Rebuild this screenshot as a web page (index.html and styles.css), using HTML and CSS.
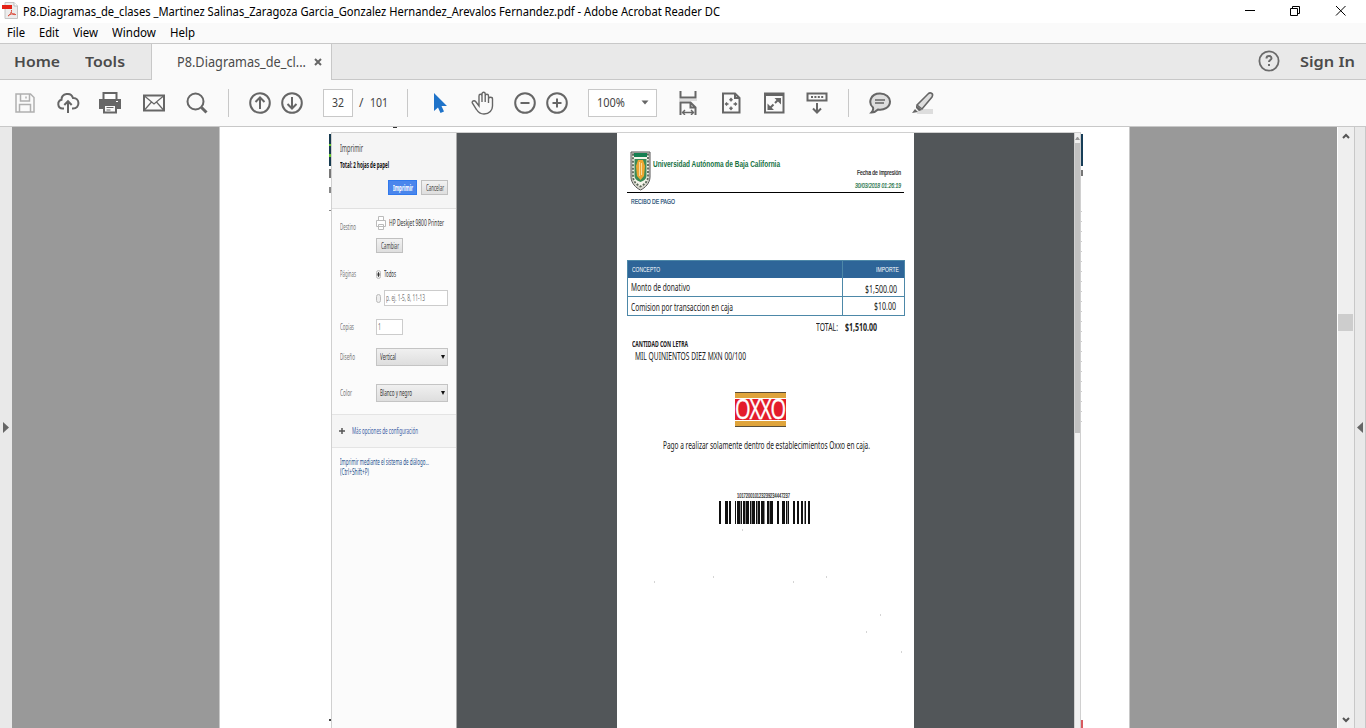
FILE: index.html
```html
<!DOCTYPE html>
<html lang="es">
<head>
<meta charset="utf-8">
<title>P8.Diagramas_de_clases - Adobe Acrobat Reader DC</title>
<link rel="stylesheet" href="styles.css">
</head>
<body>
<header class="titlebar">
  <svg class="app-icon" width="17" height="18" viewBox="0 0 17 18"><path d="M3 .5h9l3.500 3.500v12.500H3z" fill="#ececec" stroke="#c4c4c4"/><path d="M12 .5V4h3.500" fill="#fff" stroke="#bbb"/><path d="M0 3h10v4H0z" fill="#e32216"/><path d="M6 14c2-1 4-4 3.500-6M9 10c1 2 2 3 5 2.500M6 14c2-2 4-2.500 7-2" fill="none" stroke="#dc5040"/></svg>
  <span class="fit title" data-width="697">P8.Diagramas_de_clases _Martinez Salinas_Zaragoza Garcia_Gonzalez Hernandez_Arevalos Fernandez.pdf - Adobe Acrobat Reader DC</span>
  <svg class="win-buttons" width="106" height="12" viewBox="0 0 106 12" fill="none" stroke="#000"><path d="M1 5.500h10M46.500 3.500h7v7h-7zM48.500 3.500v-2h7v7h-2"/><path d="m92 1 9.500 9.500m0-9.500L92 10.500"/></svg>
</header>
<nav class="menubar">
  <span class="fit" data-width="18">File</span>
  <span class="fit" data-width="20">Edit</span>
  <span class="fit" data-width="25">View</span>
  <span class="fit" data-width="44">Window</span>
  <span class="fit" data-width="25">Help</span>
</nav>
<div class="tabbar">
  <div class="main-tabs"><b class="fit" data-width="46">Home</b><b class="fit" data-width="40">Tools</b></div>
  <div class="doc-tab"><span class="fit" data-width="129">P8.Diagramas_de_cl...</span><svg width="8" height="8" viewBox="0 0 8 8"><path d="m1 1 6 6m0-6L1 7" stroke="#666" stroke-width="2"/></svg></div>
  <div class="account">
    <svg width="22" height="22" viewBox="0 0 22 22" fill="none" stroke="#6b6b6b" stroke-width="1.800"><circle cx="11" cy="11" r="9.600"/><path d="M8.500 8.500c0-3.300 5-3 5-.3 0 1.800-2.500 1.800-2.500 3.800M11 14v2" stroke-width="2"/></svg>
    <b class="fit" data-width="55">Sign In</b>
  </div>
</div>
<div class="toolbar">
  <div class="tools file-tools">
    <svg class="muted" viewBox="0 0 24 24"><path d="M3 3h14.500L21 6.500V21H3zM7.500 3v7h9V3M6.500 21v-7.500h11V21"/><path d="M13 5.500v2"/></svg>
    <svg viewBox="0 0 24 24"><path d="M8 17.500H6.500a4.500 4.500 0 0 1-1-8.800C5.500 2.500 15 .5 17 7c7-.5 7.500 10.500 0 10.500h-1M12 22V10.500M8.300 14l3.700-3.800 3.700 3.800"/></svg>
    <svg viewBox="1 0 24 24"><path d="M5.500 8V2h13v6" fill="#fff"/><path d="M1 8h22v10h-4v-4H5v4H1z" fill="#666" stroke="none"/><path d="M6 14h12v7.500H6z" fill="#fafafa"/><path d="M8.500 16.500h7M8.500 19h4" stroke-width="1.200"/><path d="M18 10.500h2" stroke="#fff" stroke-width="1"/></svg>
    <svg viewBox="0 0 24 24"><path d="M2 4.500h20v15H2z"/><path d="m2.500 5 9.500 8 9.500-8M2.500 19l7-8M21.500 19l-7-8" stroke-width="1.200"/></svg>
    <svg viewBox="0 0 24 24"><circle cx="10.500" cy="10.500" r="8"/><path d="m16.500 16.500 5 5" stroke-width="3"/></svg>
  </div>
  <i class="rule"></i>
  <div class="tools page-tools">
    <svg viewBox="0 0 24 24"><circle cx="12" cy="12" r="9.800"/><path d="M12 18V6.500M7.500 11 12 6.500l4.500 4.500"/></svg>
    <svg viewBox="0 0 24 24"><circle cx="12" cy="12" r="9.800"/><path d="M12 6v11.500M7.500 13l4.500 4.500 4.500-4.500"/></svg>
  </div>
  <div class="page-field"><span class="fit" data-width="12">32</span></div>
  <div class="page-total"><span>/</span><span class="fit" data-width="18">101</span></div>
  <i class="rule"></i>
  <div class="tools pointer-tools">
    <svg viewBox="0 0 24 24"><path d="M6 2v18l4-3.500 2.500 5.500 3.500-1.500-2.500-5.500H19z" fill="#1f73c9" stroke="none"/></svg>
    <svg viewBox="0 0 24 24" class="thin"><path d="M8 13V5c0-2.300 3-2.300 3 0V3c0-2.300 3.200-2.300 3.200 0v2c0-2.300 3.300-2.300 3.300 0v3c0-2.300 4-2.300 4 0v7c0 4-3 8-8.500 8-4 0-6-2-7.500-4.500L1.300 12c-.8-2 2-3 3.500-1.200L8 15zM11 5v6M14.200 4v7M17.500 7v5"/></svg>
  </div>
  <div class="tools zoom-tools">
    <svg viewBox="0 0 24 24"><circle cx="12" cy="12" r="9.800"/><path d="M7.500 12h9"/></svg>
    <svg viewBox="0 0 24 24"><circle cx="12" cy="12" r="9.800"/><path d="M7.500 12h9M12 7.500v9"/></svg>
  </div>
  <div class="zoom-field"><span class="fit" data-width="28">100%</span><svg width="8" height="5" viewBox="0 0 8 5"><path d="M.5.5h7L4 4.500z" fill="#666"/></svg></div>
  <div class="tools view-tools">
    <svg viewBox="0 0 24 24"><path d="M4.500 0v6.500h15V0"/><path d="M3 8h18v2H3z" fill="#ddd" stroke="none"/><path d="M4.500 24V11.500h10l5 5V24M14.500 11.500v5h5"/><path d="M6.500 21.500h11M9 19l-2.500 2.500L9 24M15 19l2.500 2.500L15 24" stroke-width="1.400"/></svg>
    <svg viewBox="0 0 24 24"><path d="M4 2.500h12l4.500 4.500v14.500H4zM16 2.500V7h4.500"/><path d="M12 7.500v3M12 15.500v3M6.500 13h3M14.500 13h3M10.500 9.200 12 7.500l1.500 1.700M10.500 16.800l1.500 1.700 1.500-1.700M8 11.500 6.500 13 8 14.500M16 11.500l1.500 1.500-1.500 1.500" stroke-width="1.300"/></svg>
    <svg viewBox="0 0 24 24"><path d="M3 2.500h18.500v19H3z"/><path d="M3 4h18" stroke-width="2"/><path d="M12.500 7H19v6.500zM5.500 12.500V19H12z" fill="#666" stroke="none"/><path d="m13 12 4-4M7.500 17.500l4-4"/></svg>
    <svg viewBox="0 0 24 24"><path d="M2.500 2.500h19v7h-19zM12 12v9.500M8 17.500l4 4 4-4"/><path d="M6 6h12.500" stroke-dasharray="2 1.400"/></svg>
  </div>
  <i class="rule"></i>
  <div class="tools note-tools">
    <svg viewBox="0 0 24 24"><path d="M5 16.500C0 12 2 2.500 12 2.500c6 0 10 4 10 8 0 6-6.500 9-12 8-2 2-4.500 3-6.500 3 1.500-1.500 2-3 1.500-5z" fill="#dedede"/><path d="M7 9h10M7 12h9" stroke-width="1.300"/></svg>
    <svg viewBox="0 0 24 24"><path d="M7 18h15v5H6z" fill="#ddd" stroke="none"/><path d="m6 14 11-11c2-2 6-1 4 3L11 18z" fill="#dedede" stroke-width="1.600"/><path d="m5 14 6 5-3 1-3-3zM4 18l3 3-6 1z" fill="#666" stroke="none"/></svg>
  </div>
</div>

<main class="viewer">
  <aside class="side-left"><svg width="6" height="11" viewBox="0 0 6 11"><path d="M0 0v11l6-5.500z" fill="#666"/></svg></aside>
  <section class="canvas">
    <div class="page">
      <i class="descender"></i>
      <div class="sliver left"><i class="navy"></i><i class="mark m1"></i><i class="mark m2"></i><i class="mark m3"></i><i class="mark m4"></i></div>
      <div class="shot">
        <form class="print-panel">
          <div class="panel-head">
            <span class="fit heading" data-width="23">Imprimir</span>
            <b class="fit total-pages" data-width="49">Total: 2 hojas de papel</b>
            <div class="actions"><div class="btn primary"><b class="fit" data-width="20">Imprimir</b></div><div class="btn"><span class="fit" data-width="18">Cancelar</span></div></div>
          </div>
          <div class="row destination"><label><span class="fit" data-width="16">Destino</span></label><svg width="10" height="14" viewBox="0 0 10 14" fill="#fff" stroke="#bbb"><path d="M2.500 4V.5h5V4M.5 4.500h9v6h-9zM2.500 8.500h5v5h-5z"/></svg><span class="fit dark" data-width="55">HP Deskjet 9800 Printer</span></div>
          <div class="row change"><label></label><div class="btn"><span class="fit" data-width="18">Cambiar</span></div></div>
          <div class="row all"><label><span class="fit" data-width="16">Páginas</span></label><i class="radio on"></i><span class="fit dark" data-width="12">Todos</span></div>
          <div class="row range"><label></label><i class="radio"></i><div class="field wide"><span class="fit" data-width="39">p. ej. 1-5, 8, 11-13</span></div></div>
          <div class="row copies"><label><span class="fit" data-width="14">Copias</span></label><div class="field"><span class="fit" data-width="3">1</span></div></div>
          <div class="row layout"><label><span class="fit" data-width="15">Diseño</span></label><div class="select"><span class="fit" data-width="16">Vertical</span><i class="caret"></i></div></div>
          <div class="row color"><label><span class="fit" data-width="12">Color</span></label><div class="select"><span class="fit" data-width="32">Blanco y negro</span><i class="caret"></i></div></div>
          <div class="more"><svg width="6" height="6" viewBox="0 0 6 6"><path d="M0 3h6M3 0v6" stroke="#555" stroke-width="1.500"/></svg><span class="fit" data-width="66">Más opciones de configuración</span></div>
          <div class="system"><span class="fit" data-width="89">Imprimir mediante el sistema de diálogo...</span><span class="fit" data-width="29">(Ctrl+Shift+P)</span></div>
        </form>
        <div class="preview">
          <article class="receipt">
            <header class="receipt-head">
              <svg width="21" height="40" viewBox="0 0 21 40"><path d="M1 1h19v25c0 6-5 11-9.500 13C6 37 1 32 1 26z" fill="#d9d8cf" stroke="#555"/><path d="M3 3.500h15v22c0 4-3 8-7.500 10C6 33.500 3 29.500 3 25.500z" fill="#f5f5ea" stroke="#5b6758" stroke-width="1.800" stroke-dasharray="2 1.500"/><path d="M4 2h13v4H4z" fill="#168052"/><path d="M4.500 8h12v17c0 3-3 5-6 6-3-1-6-3-6-6z" fill="#3b8a56"/><path d="M8 9h5l2 6-1 10-3.500 4L7 25l-1-10z" fill="#eca632"/><path d="M9.500 11v14M11.500 12v12" stroke="#f7dd9d"/></svg>
              <b class="fit university" data-width="127">Universidad Autónoma de Baja California</b>
              <div class="date"><span class="fit" data-width="44">Fecha de impresión</span><em class="fit" data-width="46">30/03/2018 01:26:19</em></div>
            </header>
            <div class="kind"><span class="fit" data-width="44">RECIBO DE PAGO</span></div>
            <div class="table">
              <div class="tr th"><div><span class="fit" data-width="28">CONCEPTO</span></div><div><span class="fit" data-width="23">IMPORTE</span></div></div>
              <div class="tr first"><div><span class="fit" data-width="59">Monto de donativo</span></div><div><span class="fit" data-width="32">$1,500.00</span></div></div>
              <div class="tr second"><div><span class="fit" data-width="102">Comision por transaccion en caja</span></div><div><span class="fit" data-width="22">$10.00</span></div></div>
            </div>
            <div class="sum"><span class="fit" data-width="22">TOTAL:</span><b class="fit" data-width="32">$1,510.00</b></div>
            <div class="words"><b class="fit" data-width="56">CANTIDAD CON LETRA</b><span class="fit amount" data-width="111">MIL QUINIENTOS DIEZ MXN 00/100</span></div>
            <div class="oxxo"><div><b class="fit" data-width="50">OXXO</b></div></div>
            <div class="notice"><span class="fit" data-width="207">Pago a realizar solamente dentro de establecimientos Oxxo en caja.</span></div>
            <div class="barcode"><span class="fit" data-width="53">101720010123239234447237</span>
              <svg width="91" height="23" viewBox="0 0 91 23"><path d="M0 0h2v23H0zM6 0h3v23H6zM10 0h2v23h-2zM16 0h1v23h-1zM18 0h3v23h-3zM22 0h1v23h-1zM24 0h2v23h-2zM27 0h3v23h-3zM31 0h1v23h-1zM33 0h3v23h-3zM37 0h1v23h-1zM39 0h2v23h-2zM42 0h3v23h-3zM48 0h2v23h-2zM51 0h3v23h-3zM58 0h2v23h-2zM63 0h3v23h-3zM67 0h1v23h-1zM69 0h1v23h-1zM74 0h2v23h-2zM78 0h2v23h-2zM82 0h2v23h-2zM86 0h1v23h-1zM89 0h2v23h-2z" fill="#111"/><path d="M21 0h1v23h-1zM26 0h1v23h-1zM32 0h1v23h-1zM38 0h1v23h-1zM45 0h1v23h-1zM50 0h1v23h-1zM68 0h1v23h-1zM85 0h1v23h-1z" fill="#888"/></svg>
            </div>
            <svg class="specks" width="297" height="125" viewBox="0 0 297 125"><path d="M37 53h1M96 48h1M176 53h1M209 48h1M263 86h1M249 103h1M284 123h1M125 1h1" stroke="#aaa"/></svg>
          </article>
        </div>
        <div class="shot-scroll"><i class="up"></i><i class="thumb"></i></div>
      </div>
      <div class="sliver right"><i class="navy"></i><i class="mark r1"></i><i class="dots"></i><i class="red"></i></div>
    </div>
  </section>
  <div class="scrollbar"><svg width="8" height="6" viewBox="0 0 8 6"><path d="m1 5 3-3 3 3" fill="none" stroke="#555" stroke-width="2"/></svg><i class="thumb"></i><svg width="8" height="6" viewBox="0 0 8 6"><path d="m1 1 3 3 3-3" fill="none" stroke="#555" stroke-width="2"/></svg></div>
  <aside class="side-right"><svg width="6" height="11" viewBox="0 0 6 11"><path d="M6 0v11L0 5.500z" fill="#666"/></svg></aside>
</main>
<script src="fit.js"></script>
</body>
</html>
```

FILE: styles.css
```css
* { box-sizing: border-box; }
body { margin: 0; width: 1366px; height: 728px; overflow: hidden; display: flex; flex-direction: column; font: 12px "Noto Sans", sans-serif; color: #000; background: #fafafa; }
svg { display: block; flex: none; }
i { display: block; flex: none; }
.fit { display: block; flex: none; white-space: nowrap; transform-origin: 0 50%; }

.titlebar { height: 23px; flex: none; display: flex; align-items: center; background: #fff; padding-left: 2px; }
.app-icon { margin-bottom: 1px; }
.title { margin-left: 4px; }
.win-buttons { margin-left: 524px; margin-bottom: 2px; }
.menubar { height: 20px; flex: none; display: flex; align-items: center; gap: 14px; padding: 0 0 2px 7px; }

.tabbar { height: 37px; flex: none; display: flex; background: #e9e9e9; border-top: 1px solid #c8c8c8; font-size: 15px; color: #4b4b4b; }
.main-tabs { width: 151px; display: flex; align-items: center; gap: 25px; padding: 0 0 1px 14px; border-bottom: 1px solid #c8c8c8; }
.main-tabs .fit, .account .fit { font-weight: 600; }
.doc-tab { width: 181px; display: flex; align-items: center; gap: 8px; padding: 0 0 1px 25px; background: #fafafa; border: solid #c8c8c8; border-width: 0 1px; font-size: 13.500px; }
.account { flex: 1; display: flex; align-items: center; justify-content: flex-end; gap: 20px; padding: 0 11px 1px 0; border-bottom: 1px solid #c8c8c8; }

.toolbar { height: 47px; flex: none; display: flex; align-items: center; border-bottom: 1px solid #c8c8c8; color: #444; }
.tools { display: grid; grid-auto-flow: column; justify-items: center; }
.tools svg { width: 24px; height: 24px; fill: none; stroke: #666; stroke-width: 2; }
.tools svg.muted { stroke: #b0b0b0; stroke-width: 1.500; }
.tools svg.thin { stroke-width: 1.400; }
.rule { width: 1px; height: 28px; background: #c8c8c8; }
.file-tools { grid-auto-columns: 43px; margin: 0 10px 0 3px; }
.page-tools { grid-auto-columns: 32px; margin: 0 15px; }
.page-field { width: 30px; height: 28px; border: 1px solid #c8c8c8; background: #fff; display: flex; align-items: center; justify-content: center; padding-bottom: 1px; }
.page-total { display: flex; gap: 7px; width: 54px; padding: 0 0 1px 6px; }
.pointer-tools { grid-auto-columns: 43px; margin-left: 10px; }
.zoom-tools { grid-auto-columns: 32px; margin: 0 15px 0 5px; }
.zoom-field { width: 69px; height: 28px; border: 1px solid #c8c8c8; background: #fff; display: flex; align-items: center; justify-content: space-between; padding: 0 7px 1px 8px; }
.view-tools { grid-auto-columns: 43px; margin: 0 10px 0 9px; }
.note-tools { grid-auto-columns: 43px; margin-left: 9px; }

.viewer { height: 601px; flex: none; display: flex; background: #999; }
.side-left { width: 12px; background: #e9e9e9; display: flex; align-items: center; padding-left: 3px; }
.side-right { width: 12px; background: #e9e9e9; border: solid #c8c8c8; border-width: 0 1px; display: flex; align-items: center; padding-left: 2px; }
.canvas { width: 1325px; padding-left: 207px; }
.page { position: relative; width: 911px; height: 601px; display: flex; padding: 5px 0 0 109px; background: #fff; border: solid #c8c8c8; border-width: 0 1px; }
.descender { position: absolute; left: 173px; top: 0; width: 4px; height: 1px; background: #333; }
.scrollbar { width: 17px; background: #efefef; border-left: 1px solid #fff; display: flex; flex-direction: column; align-items: center; padding: 6px 1px 5px 0; }
.scrollbar .thumb { width: 15px; height: 17px; background: #cdcdcd; margin: 175px 0 auto; }

.sliver { width: 2px; display: flex; flex-direction: column; padding-top: 2px; flex: none; }
.sliver .navy { height: 32px; background: #173e58; }
.left .navy { background: linear-gradient(#173b50 0 10px, #62c626 10px 12px, #173b50 12px 20px, #62c626 20px 23px, #173b50 23px); }
.left .mark { height: 2px; background: #888; margin-top: 3px; }
.left .m1 { height: 9px; background: #777; }
.left .m2 { height: 6px; margin-top: 9px; }
.left .m3 { height: 1px; margin-top: 17px; }
.left .m4 { background: #444; margin-top: auto; margin-bottom: 7px; }
.right .r1 { height: 6px; margin-top: 4px; background: #777; }
.right .dots { width: 1px; height: 220px; margin-top: 26px; background: repeating-linear-gradient(#fff 0 9px, #ccc 9px 10px); }
.right .red { height: 8px; margin-top: auto; background: #d85b60; }
.shot { width: 750px; flex: none; display: flex; border: solid #d0d0d0; border-width: 1px 0 0 1px; }

.print-panel { width: 125px; flex: none; background: #fbfbfb; border-right: 1px solid #aaa; font-size: 8.200px; line-height: 10px; color: #777; }
.panel-head { height: 76px; padding: 9px 8px 0; background: #f5f5f5; border-bottom: 1px solid #e0e0e0; display: flex; flex-direction: column; color: #333; }
.heading { font-size: 10px; line-height: 12px; color: #444; }
.total-pages { margin-top: 6px; color: #111; }
.actions { display: flex; gap: 4px; justify-content: flex-end; margin-top: 10px; }
.btn { height: 15px; width: 27px; display: flex; align-items: center; justify-content: center; background: linear-gradient(#f2f2f2, #dedede); border: 1px solid #c0c0c0; color: #444; }
.btn.primary { width: 29px; background: #4a86ec; border-color: #3079ed; color: #fff; }
.row { display: flex; align-items: center; padding-left: 8px; }
.row label { width: 36px; flex: none; }
.dark { color: #333; }
.destination { height: 14px; margin-top: 7px; }
.destination label { padding-top: 8px; }
.destination .dark { margin-left: 3px; }
.change { margin-top: 8px; }
.all { height: 12px; margin-top: 15px; }
.radio { width: 5px; height: 9px; border: 1px solid #bbb; border-radius: 3px; background: #eee; margin-right: 3px; }
.radio.on { background: radial-gradient(ellipse, #333 0 35%, #eee 60%); }
.range { height: 16px; margin-top: 10px; }
.field { width: 27px; height: 16px; display: flex; align-items: center; padding-left: 1px; border: 1px solid #ccc; background: #fff; }
.field.wide { width: 64px; }
.copies { margin-top: 13px; }
.layout { margin-top: 13px; }
.color { margin-top: 18px; }
.select { width: 72px; height: 18px; display: flex; align-items: center; justify-content: space-between; padding: 0 2px 0 3px; border: 1px solid #c4c4c4; background: linear-gradient(#f0f0f0, #dedede); color: #333; }
.caret { border: 2px solid transparent; border-top: 4px solid #111; border-bottom: 0; }
.more { height: 34px; margin-top: 12px; display: flex; align-items: center; gap: 7px; padding: 0 0 1px 7px; background: #f5f5f5; border: solid #e4e4e4; border-width: 1px 0; color: #3d62a5; }
.system { display: flex; flex-direction: column; padding: 9px 8px 0; color: #24508c; }

.preview { width: 617px; flex: none; padding-left: 160px; background: #525659; }
.receipt { width: 297px; height: 595px; background: #fff; padding-left: 10px; font-size: 10px; line-height: 12px; color: #222; }
.receipt-head { width: 277px; height: 60px; padding: 18px 3px 0; display: flex; border-bottom: 1px solid #000; }
.university { margin: 7px 0 0 2px; font: bold 9px/12px "Liberation Sans", sans-serif; color: #167142; }
.date { flex: 1; display: flex; flex-direction: column; align-items: flex-end; gap: 3px; padding-top: 17px; font: 7px/10px "Liberation Sans", sans-serif; }
.date .fit { -webkit-text-stroke: .2px; }
.date em { color: #176c3e; }
.kind { height: 67px; padding: 4px 4px; font: 7.500px/10px "Liberation Sans", sans-serif; color: #16476f; -webkit-text-stroke: .2px; }
.table { width: 278px; height: 56px; border: 1px solid #4d88a8; }
.tr { display: grid; grid-template-columns: 214px 62px; height: 18px; }
.th { height: 17px; }
.tr > div { display: flex; align-items: center; padding-left: 3px; }
.tr > div + div { justify-content: flex-end; padding-right: 7px; border-left: 1px solid #4d88a8; }
.th { background: #2e6598; color: #fff; font: 7px "Liberation Sans", sans-serif; }
.th > div:first-child { padding-left: 4px; }
.th > div + div { padding-right: 5px; }
.second { border-top: 1px solid #4d88a8; height: 19px; }
.first > div + div { padding-top: 3px; }
.second > div:first-child { padding-top: 2px; }
.tr.second > div + div { padding-right: 8px; }
.sum { display: flex; gap: 7px; padding: 5px 0 0 189px; height: 21px; }
.words { display: flex; flex-direction: column; height: 55px; padding: 1px 5px 0; }
.words b { font-size: 8px; }
.amount { margin-left: 3px; }
.oxxo { width: 51px; height: 35px; margin-left: 108px; padding: 5px 0; background: #dfa43b; border: solid #594d38; border-width: 1px 0; }
.oxxo div { height: 23px; background: #e31c2b; border: solid #fff; border-width: 1px 0; display: flex; align-items: center; font: 500 27px/20px "Open Sans", sans-serif; color: #fff; }
.oxxo b { font-weight: 500; letter-spacing: -1.500px; margin-top: -2px; -webkit-text-stroke: .4px #fff; }
.notice { padding: 12px 0 0 36px; height: 63px; }
.barcode { padding-left: 92px; }
.barcode .fit { margin-left: 18px; height: 11px; padding-top: 1px; font: 7px/10px "Liberation Sans", sans-serif; -webkit-text-stroke: .2px; }
.specks { margin: 5px 0 0 -10px; }
.shot-scroll { width: 7px; background: #f0f0f0; border: solid #d0d0d0; border-width: 0 1px; padding-top: 4px; }
.shot-scroll .up { border: 2px solid transparent; border-top: 0; border-bottom: 3px solid #999; }
.shot-scroll .thumb { height: 290px; margin-top: 3px; background: #c1c1c1; }
```

FILE: fit.js
```js
// Condense or widen each label to the width given in its data-width attribute.
document.querySelectorAll('.fit').forEach(function (el) {
  var target = Number(el.dataset.width);
  var probe = document.createRange();
  probe.selectNodeContents(el);
  var natural = probe.getBoundingClientRect().width;
  el.style.width = target + 'px';
  el.style.transform = 'scaleX(' + target / natural + ')';
  el.style.transformOrigin = '0 50%';
});
```
